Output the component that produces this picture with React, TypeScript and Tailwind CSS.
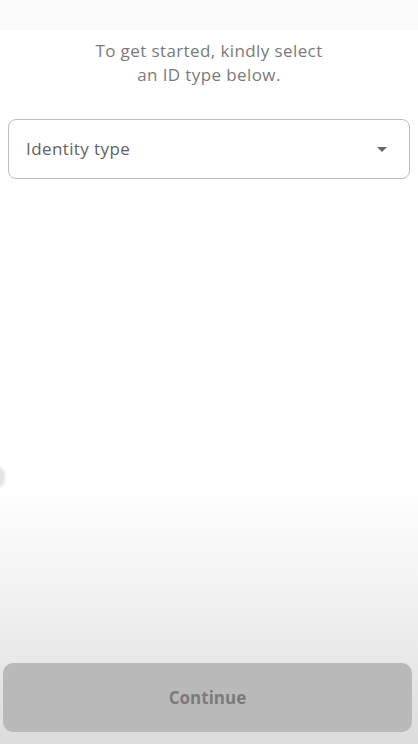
export default function App() {
  return (
    <div
      className="relative flex h-[744px] w-[418px] flex-col overflow-hidden bg-white"
      style={{ fontFamily: "'Open Sans', Lato, sans-serif" }}
    >
      <div className="h-[30px] bg-[#fafafa]" />

      <p className="mt-[9px] text-center text-[17px] leading-[24px] tracking-[0.4px] text-[#7a7a7a]">
        To get started, kindly select
        <br />
        an ID type below.
      </p>

      <div className="mx-[8px] mt-[32px] flex h-[60px] items-center justify-between rounded-[8px] border border-[#bdbdbd] pl-[17px] pr-[22px]">
        <span className="text-[17px] tracking-[0.4px] text-[#616161]">Identity type</span>
        <svg width="10" height="5" viewBox="0 0 10 5">
          <path d="M0 0h10L5 5z" fill="#666666" />
        </svg>
      </div>

      {/* faded edge of something sitting off-screen */}
      <div className="absolute left-[-12px] top-[466px] h-[22px] w-[17px] rounded-full bg-[#e4e4e4] blur-[1px]" />

      <div className="flex-1" />

      <div className="flex h-[260px] flex-col justify-end bg-gradient-to-b from-white via-[#efefef] to-[#dcdcdc] px-[3px] pb-[12px]">
        <button className="flex h-[69px] w-[409px] items-center justify-center rounded-[10px] bg-[#b9b9ba] text-[17px] font-bold text-[#7b7b7b]">
          Continue
        </button>
      </div>
    </div>
  );
}
